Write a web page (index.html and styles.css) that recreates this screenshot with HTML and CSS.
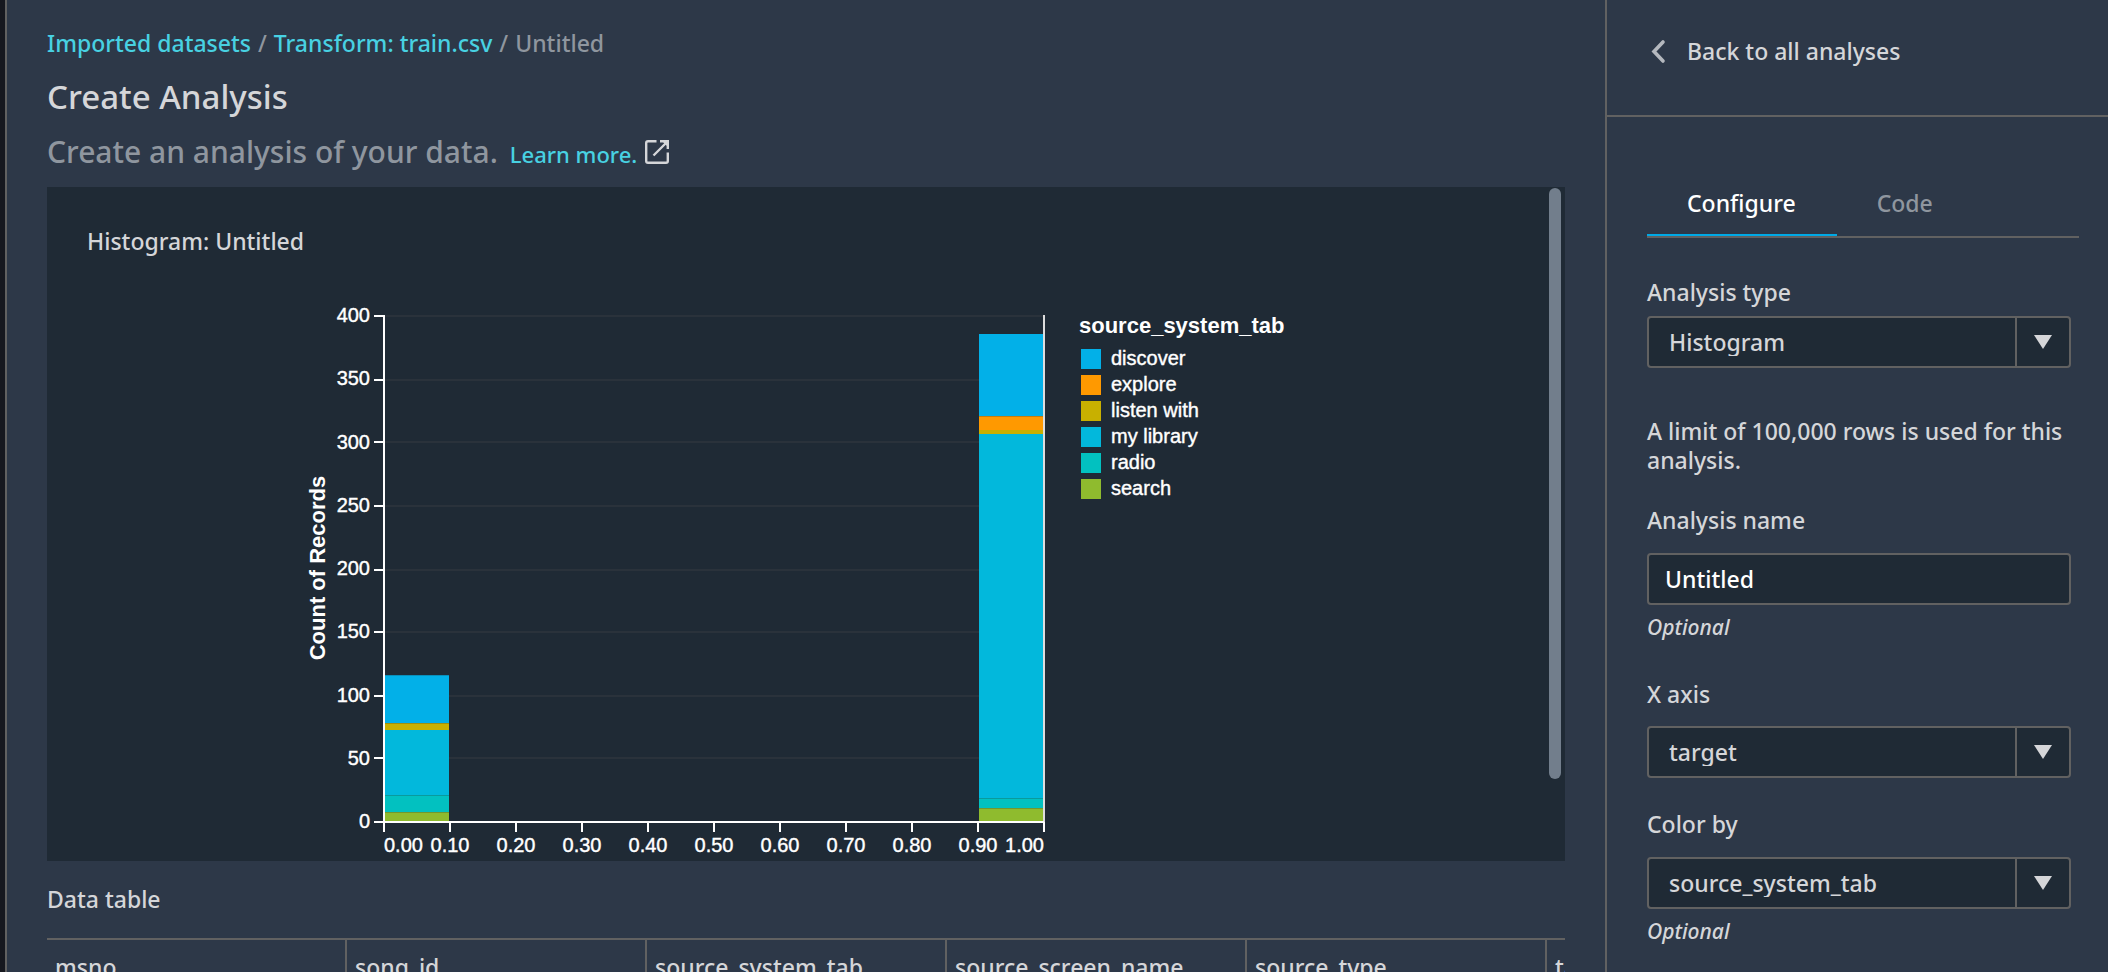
FILE: index.html
```html
<!DOCTYPE html>
<html lang="en">
<head>
<meta charset="utf-8">
<title>Create Analysis</title>
<link rel="stylesheet" href="styles.css">
</head>
<body>
<div class="app">
  <main class="main">
    <nav class="breadcrumb" aria-label="Breadcrumb">
      <a href="#">Imported datasets</a><span>/</span><a href="#">Transform: train.csv</a><span>/</span><span>Untitled</span>
    </nav>
    <h1 class="title">Create Analysis</h1>
    <p class="subtitle">
      <span>Create an analysis of your data.</span>
      <a href="#">Learn more.</a>
      <svg class="external" viewBox="0 0 24 24" width="24" height="24" aria-hidden="true">
        <path d="M11.5 1.2H3Q1.2 1.2 1.2 3V21Q1.2 22.8 3 22.8H21Q22.8 22.8 22.8 21V12.5M15 1.2H22.8V9M21 3L8.5 15.5"/>
        <path class="head" d="M17 1L23 1V7Z"/>
      </svg>
    </p>

    <section class="panel">
      <h2 class="panel-title">Histogram: Untitled</h2>
      <svg class="chart" viewBox="302 300 992 561" width="992" height="561" role="img" aria-label="Histogram of target by source_system_tab">
        <g class="grid">
          <path d="M384 316H1044M384 380H1044M384 442H1044M384 506H1044M384 570H1044M384 632H1044M384 696H1044M384 758H1044"/>
        </g>
        <path class="edge" d="M1044 315V822"/>
        <g class="bars">
          <rect class="discover" x="385" y="675" width="64" height="48"/>
          <rect class="listen" x="385" y="723" width="64" height="7"/>
          <rect class="library" x="385" y="730" width="64" height="65"/>
          <rect class="radio" x="385" y="795" width="64" height="17"/>
          <rect class="search" x="385" y="812" width="64" height="10"/>
          <rect class="discover" x="979" y="334" width="64" height="82"/>
          <rect class="explore" x="979" y="416" width="64" height="14"/>
          <rect class="listen" x="979" y="430" width="64" height="4"/>
          <rect class="library" x="979" y="434" width="64" height="364"/>
          <rect class="radio" x="979" y="798" width="64" height="10"/>
          <rect class="search" x="979" y="808" width="64" height="14"/>
        </g>
        <path class="seam" d="M385 675.5H449M385 723.5H449M385 795.5H449M385 812.5H449M979 416.5H1043M979 798.5H1043M979 808.5H1043"/>
        <g class="axis">
          <path d="M384 315V822M374 822H1044"/>
          <path d="M374 316H384M374 380H384M374 442H384M374 506H384M374 570H384M374 632H384M374 696H384M374 758H384"/>
          <path d="M384 822V832M450 822V832M516 822V832M582 822V832M648 822V832M714 822V832M780 822V832M846 822V832M912 822V832M978 822V832M1044 822V832"/>
        </g>
        <g class="tick-label end">
          <text x="370" y="322">400</text><text x="370" y="385">350</text><text x="370" y="449">300</text>
          <text x="370" y="512">250</text><text x="370" y="575">200</text><text x="370" y="638">150</text>
          <text x="370" y="702">100</text><text x="370" y="765">50</text><text x="370" y="828">0</text>
        </g>
        <g class="tick-label">
          <text x="384" y="852">0.00</text>
        </g>
        <g class="tick-label middle">
          <text x="450" y="852">0.10</text><text x="516" y="852">0.20</text><text x="582" y="852">0.30</text>
          <text x="648" y="852">0.40</text><text x="714" y="852">0.50</text><text x="780" y="852">0.60</text>
          <text x="846" y="852">0.70</text><text x="912" y="852">0.80</text><text x="978" y="852">0.90</text>
        </g>
        <g class="tick-label end">
          <text x="1044" y="852">1.00</text>
        </g>
        <text class="axis-title" transform="translate(325 568) rotate(-90)">Count of Records</text>
        <text class="legend-title" x="1079" y="333">source_system_tab</text>
        <rect class="discover" x="1081" y="349" width="20" height="20"/>
        <rect class="explore" x="1081" y="375" width="20" height="20"/>
        <rect class="listen" x="1081" y="401" width="20" height="20"/>
        <rect class="library" x="1081" y="427" width="20" height="20"/>
        <rect class="radio" x="1081" y="453" width="20" height="20"/>
        <rect class="search" x="1081" y="479" width="20" height="20"/>
        <g class="tick-label">
          <text x="1111" y="365">discover</text><text x="1111" y="391">explore</text><text x="1111" y="417">listen with</text>
          <text x="1111" y="443">my library</text><text x="1111" y="469">radio</text><text x="1111" y="495">search</text>
        </g>
      </svg>
      <div class="scrollbar" aria-hidden="true"></div>
    </section>

    <h2 class="section-title">Data table</h2>
    <div class="table-wrap">
      <table class="data">
        <thead>
          <tr><th scope="col">msno</th><th scope="col">song_id</th><th scope="col">source_system_tab</th><th scope="col">source_screen_name</th><th scope="col">source_type</th><th scope="col">target</th></tr>
        </thead>
      </table>
    </div>
  </main>

  <aside class="side">
    <header class="side-head">
      <button class="back" type="button">
        <svg viewBox="0 0 16 28" width="16" height="28" aria-hidden="true"><path d="M13 5L4 14.5L13 24"/></svg>
        Back to all analyses
      </button>
    </header>
    <div class="side-body">
      <div class="tabs" role="tablist">
        <button class="tab active" type="button" role="tab" aria-selected="true">Configure</button>
        <button class="tab" type="button" role="tab" aria-selected="false">Code</button>
      </div>
      <form class="form">
        <div class="field type">
          <label for="type">Analysis type</label>
          <div class="select">
            <select id="type"><option>Histogram</option></select>
            <span class="arrow"><svg viewBox="0 0 18 14" width="18" height="14" aria-hidden="true"><path d="M0 0H18L9 14Z"/></svg></span>
          </div>
        </div>
        <p class="note">A limit of 100,000 rows is used for this analysis.</p>
        <div class="field name">
          <label for="name">Analysis name</label>
          <input id="name" type="text" value="Untitled">
          <span class="hint">Optional</span>
        </div>
        <div class="field">
          <label for="xaxis">X axis</label>
          <div class="select">
            <select id="xaxis"><option>target</option></select>
            <span class="arrow"><svg viewBox="0 0 18 14" width="18" height="14" aria-hidden="true"><path d="M0 0H18L9 14Z"/></svg></span>
          </div>
        </div>
        <div class="field color">
          <label for="color">Color by</label>
          <div class="select">
            <select id="color"><option>source_system_tab</option></select>
            <span class="arrow"><svg viewBox="0 0 18 14" width="18" height="14" aria-hidden="true"><path d="M0 0H18L9 14Z"/></svg></span>
          </div>
          <span class="hint">Optional</span>
        </div>
      </form>
    </div>
  </aside>
</div>
</body>
</html>
```
FILE: styles.css
```css
* { box-sizing: border-box; }

body {
  margin: 0;
  background: #2d3848;
  color: #d5d6d9;
  font: 500 23px/28px "Noto Sans", "Open Sans", sans-serif;
}

h1, h2, p { margin: 0; }

a { color: #48d1e2; text-decoration: none; }

button, input, select { font: inherit; color: inherit; }

.app {
  display: flex;
  height: 100vh;
  overflow: hidden;
  border-left: 5px solid #16181f;
}

/* Main column */
.main {
  flex: 1;
  min-width: 0;
  padding: 29px 40px 0;
  border-left: 2px solid #616161;
}

.breadcrumb { display: flex; gap: 7px; color: #8f969f; }

.title { margin-top: 20px; font-size: 33px; line-height: 40px; font-weight: 500; }

.subtitle {
  display: flex;
  align-items: baseline;
  gap: 8px;
  margin-top: 15px;
  color: #8f969f;
  font-size: 30px;
  line-height: 40px;
}

.subtitle a { margin-left: 4px; font-size: 22px; line-height: 28px; }

.external {
  align-self: center;
  fill: none;
  stroke: #d5d6d9;
  stroke-width: 2.4;
}

.external .head { fill: #d5d6d9; stroke: none; }

.panel {
  position: relative;
  margin-top: 15px;
  padding: 40px 16px 0 0;
  background: #1f2a35;
}

.panel-title { margin-left: 40px; font-size: 23px; font-weight: 500; }

.chart { display: block; margin: 45px auto 0; }

.scrollbar {
  position: absolute;
  top: 1px;
  right: 4px;
  width: 12px;
  height: 591px;
  border-radius: 6px;
  background: #727e8c;
}

/* Chart */
.chart text { fill: #fff; font-family: "Liberation Sans", Arial, sans-serif; font-weight: 400; }
.chart .tick-label text { font-size: 20px; stroke: #fff; stroke-width: 0.4px; }
.chart .end { text-anchor: end; }
.chart .middle { text-anchor: middle; }
.chart .axis-title { font-size: 22px; font-weight: 700; text-anchor: middle; }
.chart .legend-title { font-size: 22px; font-weight: 700; }
.grid path { stroke: #2a323b; stroke-width: 2; }
.axis path { stroke: #fff; stroke-width: 2; }
.edge { stroke: #ddd; stroke-width: 2; }
.seam { stroke: #1f2a35; stroke-opacity: 0.25; }
.discover { fill: #02b0e8; }
.explore { fill: #ff9900; }
.listen { fill: #c8b000; }
.library { fill: #02b8dc; }
.radio { fill: #02c1c0; }
.search { fill: #8fbb2e; }

/* Table */
.section-title { margin-top: 24px; font-size: 23px; font-weight: 500; }

.table-wrap { margin-top: 25px; overflow: hidden; border-top: 2px solid #616161; }

.data { width: 1800px; table-layout: fixed; border-collapse: separate; border-spacing: 0; }

.data th { padding: 13px 8px; border-right: 2px solid #616161; font-weight: 500; text-align: left; }

/* Sidebar */
.side { flex: 0 0 503px; border-left: 2px solid #616161; }

.side-head { padding: 37px 40px 50px; border-bottom: 2px solid #616161; }

.back {
  display: flex;
  align-items: center;
  gap: 21px;
  padding: 0 0 0 3px;
  border: 0;
  background: none;
}

.back path { fill: none; stroke: #b4b8be; stroke-width: 3.6; stroke-linecap: round; }

.side-body { padding: 72px 29px 0 40px; }

.tabs { display: flex; border-bottom: 2px solid #616161; }

.tab {
  padding: 0 41px 17px 40px;
  border: 0;
  border-bottom: 2px solid transparent;
  background: none;
  color: #8f969f;
}

.tab.active { border-bottom-color: #00a9e6; color: #fff; }

.form { padding: 40px 8px 0 0; }

.field { display: flex; flex-direction: column; gap: 18px; margin-top: 39px; }
.field.type { gap: 10px; margin-top: 0; }
.field.name { gap: 19px; margin-top: 31px; }
.field.color { gap: 19px; margin-top: 32px; }

.note { margin-top: 49px; line-height: 29px; }

.field input, .field select {
  width: 100%;
  height: 52px;
  padding: 0 17px;
  border: 2px solid #616161;
  border-radius: 4px;
  background: #1f2a35;
}

.field input { padding-left: 16px; color: #fff; }

.select { display: grid; grid-template-columns: 1fr 56px; }

.select select {
  grid-area: 1 / 1 / 2 / 3;
  padding: 0 76px 0 20px;
  appearance: none;
}

.arrow {
  grid-area: 1 / 2 / 2 / 3;
  display: flex;
  align-items: center;
  justify-content: center;
  border-left: 2px solid #616161;
  margin: 2px 0;
  padding-right: 2px;
  pointer-events: none;
}

.arrow path { fill: #d5d6d9; }

.hint { margin-top: -11px; font-size: 21px; font-style: italic; }
```
